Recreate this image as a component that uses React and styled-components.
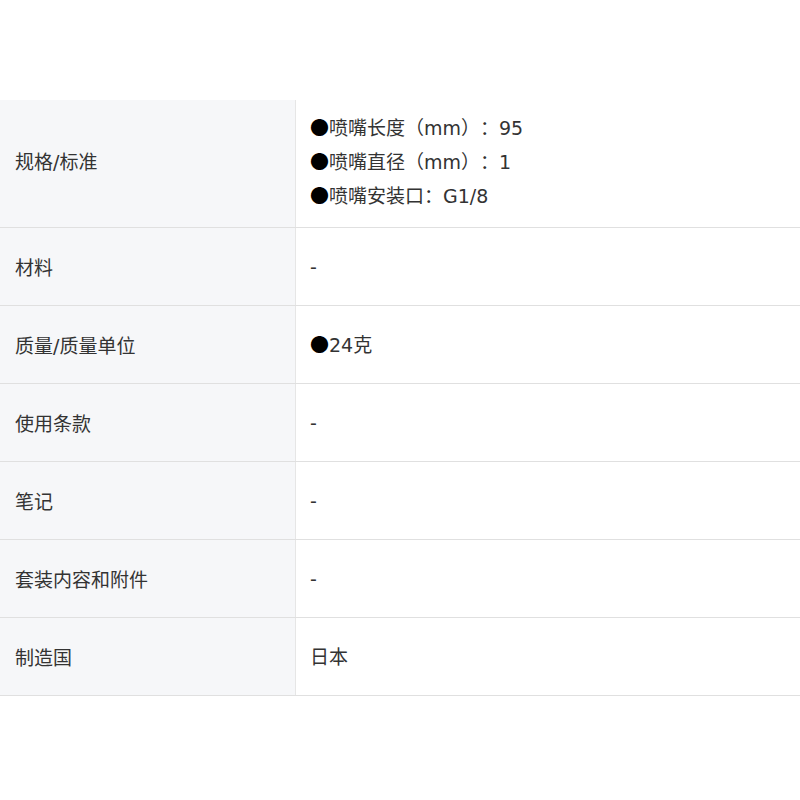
import React from 'react';
import styled, { createGlobalStyle } from 'styled-components';

const GlobalStyle = createGlobalStyle`
  body {
    margin: 0;
    background: #ffffff;
    font-family: "DejaVu Sans", "Noto Sans CJK SC", sans-serif;
    color: #333333;
  }
`;

const Page = styled.div`
  padding-top: 100px;
  width: 800px;
`;

const SpecTable = styled.div`
  display: flex;
  flex-direction: column;
`;

const Row = styled.div`
  display: grid;
  grid-template-columns: 296px 1fr;
  border-bottom: 1px solid #e0e0e0;
  height: ${p => (p.$multi ? '127px' : '77px')};
  box-sizing: content-box;
`;

const Label = styled.div`
  display: flex;
  align-items: center;
  padding: ${p => (p.$multi ? '0 15px 7px' : '0 15px')};
  background: #f6f7f9;
  border-right: 1px solid #e6e6e6;
  font-size: 19px;
`;

const Value = styled.div`
  display: flex;
  flex-direction: column;
  justify-content: center;
  padding: ${p => (p.$multi ? '0 14px 4px' : '0 14px')};
  font-size: 19px;
  text-spacing-trim: space-all;
`;

const Line = styled.div`
  height: 34px;
  line-height: 34px;
  white-space: nowrap;
`;

const Bullet = styled.span`
  font-family: "Noto Sans CJK SC", sans-serif;
  font-size: 19px;
  line-height: 0;
  color: #000;
`;

const rows = [
  {
    label: '规格/标准',
    lines: ['喷嘴长度（mm）：95', '喷嘴直径（mm）：1', '喷嘴安装口：G1/8'],
    bullet: true,
  },
  { label: '材料', lines: ['-'] },
  { label: '质量/质量单位', lines: ['24克'], bullet: true },
  { label: '使用条款', lines: ['-'] },
  { label: '笔记', lines: ['-'] },
  { label: '套装内容和附件', lines: ['-'] },
  { label: '制造国', lines: ['日本'] },
];

const App = () => (
  <Page>
    <GlobalStyle />
    <SpecTable>
      {rows.map(row => {
        const multi = row.lines.length > 1;
        return (
          <Row key={row.label} $multi={multi}>
            <Label $multi={multi}>{row.label}</Label>
            <Value $multi={multi}>
              {row.lines.map(line => (
                <Line key={line}>
                  {row.bullet && <Bullet>●</Bullet>}
                  {line}
                </Line>
              ))}
            </Value>
          </Row>
        );
      })}
    </SpecTable>
  </Page>
);

export default App;
